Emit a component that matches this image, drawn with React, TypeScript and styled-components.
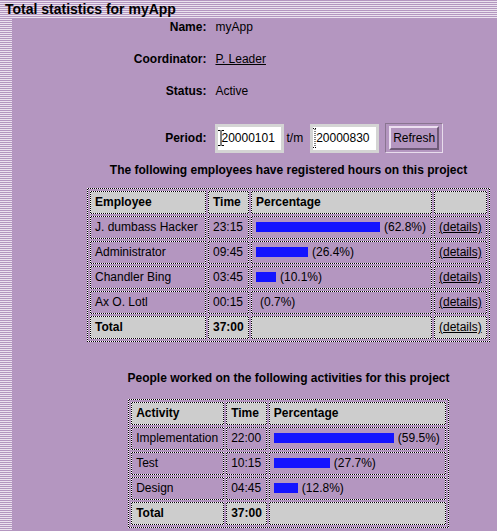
import React from 'react';
import styled, { createGlobalStyle } from 'styled-components';

const purple = '#b496c0';
const stripeLight = '#ebe3ee';
const headGrey = '#cdcdcd';
const barBlue = '#1414ff';

const stripes = `repeating-linear-gradient(to bottom, ${purple} 0 1px, ${stripeLight} 1px 2px)`;
const dots = 'repeating-conic-gradient(#000 0 25%, #fff 0 50%) 0 0 / 2px 2px border-box';

const GlobalStyle = createGlobalStyle`
  html, body {
    margin: 0;
    padding: 0;
    background: ${purple};
  }
  body {
    font-family: "Liberation Sans", Arial, Helvetica, sans-serif;
    font-size: 12px;
    color: #000;
  }
`;

const Page = styled.div`
  display: flex;
  flex-direction: column;
  min-height: 531px;
`;

const TitleBar = styled.h1`
  margin: 0;
  height: 18px;
  padding-left: 5px;
  background: ${stripes};
  font-size: 14px;
  font-weight: bold;
  line-height: 18px;
`;

const Body = styled.div`
  flex: 1;
  display: flex;
`;

const Gutter = styled.div`
  width: 12px;
  flex: none;
  background: ${stripes};
`;

const Main = styled.main`
  flex: 1;
  padding-left: 68px;
  display: flex;
  flex-direction: column;
  align-items: center;
`;

const InfoGrid = styled.div`
  display: grid;
  grid-template-columns: auto auto;
  column-gap: 9px;
  row-gap: 14px;
  align-items: center;
`;

const Label = styled.div<{ $gapAbove?: number }>`
  font-weight: bold;
  text-align: right;
  line-height: 18px;
  margin-top: ${({ $gapAbove }) => $gapAbove || 0}px;
`;

const Value = styled.div<{ $gapAbove?: number }>`
  line-height: 18px;
  display: flex;
  align-items: center;
  margin-top: ${({ $gapAbove }) => $gapAbove || 0}px;
`;

const PlainLink = styled.a`
  color: #000;
  font-weight: normal;
  text-decoration: underline;
`;

const InputWrap = styled.span`
  position: relative;
  display: inline-flex;
`;

const DateInput = styled.input`
  box-sizing: border-box;
  width: 69px;
  height: 29px;
  border: 3px solid #d4d4d4;
  padding: 0 3px;
  background: #fff;
  font-family: "Liberation Sans", Arial, sans-serif;
  font-size: 12px;
  color: #000;
  outline: none;
`;

const CursorMark = styled.svg<{ $left: number; $top: number }>`
  position: absolute;
  left: ${({ $left }) => $left}px;
  top: ${({ $top }) => $top}px;
  pointer-events: none;
`;

const Sep = styled.span`
  margin: 0 7px 0 2px;
`;

const ButtonFrame = styled.span`
  margin-left: 6px;
  padding: 2px 3px;
  border: 1px solid;
  border-color: #8a7591 #e8dcec #e8dcec #8a7591;
  display: flex;
`;

const RefreshButton = styled.button`
  height: 24px;
  padding: 0 2px;
  border: 2px solid;
  border-color: #ecdff0 #6f5a78 #6f5a78 #ecdff0;
  background: ${purple};
  font-family: "Liberation Sans", Arial, sans-serif;
  font-size: 12px;
  color: #000;
`;

const Heading = styled.h2<{ $top: number }>`
  margin: ${({ $top }) => $top}px 0 0;
  font-size: 12px;
  font-weight: bold;
  line-height: 14px;
`;

const Table = styled.table<{ $top: number }>`
  margin-top: ${({ $top }) => $top}px;
  border-collapse: separate;
  border-spacing: 2px;
  border: 1px solid transparent;
  background: linear-gradient(${purple}, ${purple}) padding-box, ${dots};
`;

const Cell = styled.td<{ $head?: boolean; $w?: number }>`
  box-sizing: border-box;
  ${({ $w }) => ($w ? `width: ${$w}px;` : '')}
  height: 23px;
  padding: 3px 4px;
  border: 1px solid transparent;
  background: linear-gradient(${({ $head }) => ($head ? headGrey : purple)}, ${({ $head }) => ($head ? headGrey : purple)}) padding-box, ${dots};
  font-weight: ${({ $head }) => ($head ? 'bold' : 'normal')};
  line-height: 15px;
  text-align: left;
  white-space: nowrap;
`;

const Bar = styled.span`
  display: inline-block;
  height: 10px;
  margin-right: 4px;
  vertical-align: -1px;
  background: ${barBlue};
`;

type Row = { name: string; time: string; pct: string; bar: number };

const employees: Row[] = [
  { name: 'J. dumbass Hacker', time: '23:15', pct: '62.8', bar: 124 },
  { name: 'Administrator', time: '09:45', pct: '26.4', bar: 52 },
  { name: 'Chandler Bing', time: '03:45', pct: '10.1', bar: 20 },
  { name: 'Ax O. Lotl', time: '00:15', pct: '0.7', bar: 0 },
];

const activities: Row[] = [
  { name: 'Implementation', time: '22:00', pct: '59.5', bar: 120 },
  { name: 'Test', time: '10:15', pct: '27.7', bar: 56 },
  { name: 'Design', time: '04:45', pct: '12.8', bar: 24 },
];

function StatsTable({
  top,
  first,
  rows,
  widths,
  details,
}: {
  top: number;
  first: string;
  rows: Row[];
  widths: number[];
  details?: boolean;
}) {
  return (
    <Table $top={top}>
      <tbody>
        <tr>
          <Cell as="th" $head $w={widths[0]}>{first}</Cell>
          <Cell as="th" $head $w={widths[1]}>Time</Cell>
          <Cell as="th" $head $w={widths[2]}>Percentage</Cell>
          {details && <Cell as="th" $head $w={widths[3]} />}
        </tr>
        {rows.map((r) => (
          <tr key={r.name}>
            <Cell>{r.name}</Cell>
            <Cell>{r.time}</Cell>
            <Cell>
              <Bar style={{ width: r.bar }} />({r.pct}%)
            </Cell>
            {details && (
              <Cell>
                <PlainLink href="#">(details)</PlainLink>
              </Cell>
            )}
          </tr>
        ))}
        <tr>
          <Cell $head>Total</Cell>
          <Cell $head>37:00</Cell>
          <Cell $head />
          {details && (
            <Cell $head>
              <PlainLink href="#">(details)</PlainLink>
            </Cell>
          )}
        </tr>
      </tbody>
    </Table>
  );
}

export default function App() {
  return (
    <Page>
      <GlobalStyle />
      <TitleBar>Total statistics for myApp</TitleBar>
      <Body>
        <Gutter />
        <Main>
          <InfoGrid>
            <Label>Name:</Label>
            <Value>myApp</Value>
            <Label>Coordinator:</Label>
            <Value>
              <PlainLink href="#">P. Leader</PlainLink>
            </Value>
            <Label>Status:</Label>
            <Value>Active</Value>
            <Label $gapAbove={9}>Period:</Label>
            <Value $gapAbove={9}>
              <InputWrap>
                <DateInput defaultValue="20000101" />
                <CursorMark $left={3} $top={6} width="6" height="16" viewBox="0 0 6 16">
                  <path d="M0 0.5H2.5M3.5 0.5H6M3 1V15M0 15.5H2.5M3.5 15.5H6" stroke="#000" strokeWidth="1" fill="none" />
                </CursorMark>
              </InputWrap>
              <Sep>t/m</Sep>
              <InputWrap>
                <DateInput defaultValue="20000830" />
                <CursorMark $left={3} $top={4} width="4" height="20" viewBox="0 0 4 20">
                  <path d="M0 0.5H4M2 1V19M0 19.5H4" stroke="#000" strokeWidth="1" strokeDasharray="1 1" fill="none" />
                </CursorMark>
              </InputWrap>
              <ButtonFrame>
                <RefreshButton>Refresh</RefreshButton>
              </ButtonFrame>
            </Value>
          </InfoGrid>
          <Heading $top={10}>The following employees have registered hours on this project</Heading>
          <StatsTable top={11} first="Employee" rows={employees} widths={[116, 41, 181, 53]} details />
          <Heading $top={29}>People worked on the following activities for this project</Heading>
          <StatsTable top={14} first="Activity" rows={activities} widths={[93, 40, 177]} />
        </Main>
      </Body>
    </Page>
  );
}
